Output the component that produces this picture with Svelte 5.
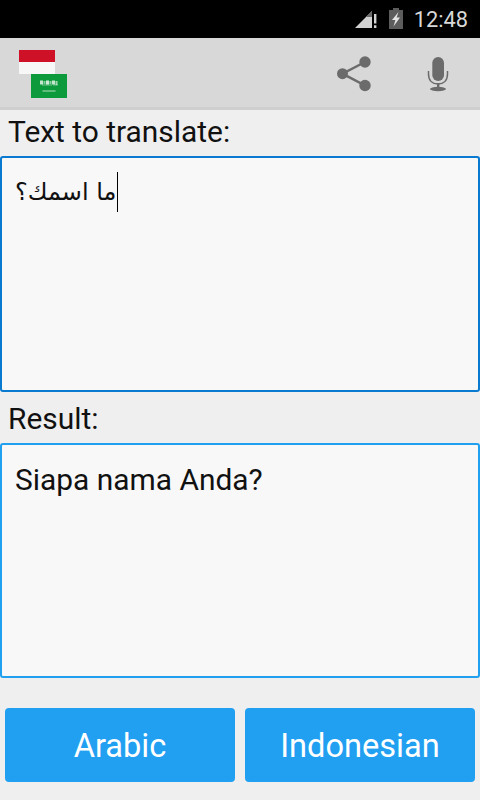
<script>
  const source = 'ما اسمك؟';
  const script = [
    [9, 6.5, 3, 4, 0.75], [12.500, 7, 2, 3, 0.5], [15, 6.500, 3, 4, 0.8], [18.500, 7, 2, 3, 0.55],
    [21, 6.500, 3, 4, 0.75], [24.500, 7, 2, 4, 0.6], [11, 10.500, 10, 1, 0.45], [22, 10.500, 5, 1, 0.4]
  ];
</script>

<div class="screen">
  <header class="status">
    <svg class="signal" width="22" height="20" viewBox="0 0 22 20">
      <path d="M0 19 L17 2 V19 Z" fill="#d2d2d2" />
      <path d="M11 8 L17 2 V8 Z" fill="#6a6a6a" />
      <path d="M19 5 h2.400 v9.500 h-2.400 z M19 16.200 h2.400 v2.800 h-2.400 z" fill="#d2d2d2" />
    </svg>
    <svg class="battery" width="14" height="21" viewBox="0 0 14 21">
      <path d="M4 0 h6 v2 h4 v19 H0 V2 h4 z" fill="#5c5c5c" />
      <path d="M9.500 4 L3 12 h3.400 L4.500 18.500 L11 9.500 H7.600 Z" fill="#e4e4e4" />
    </svg>
    <span class="clock">12:48</span>
  </header>

  <nav class="toolbar">
    <div class="flags">
      <svg class="flag-id" width="36" height="24" viewBox="0 0 36 24">
        <rect width="36" height="12" fill="#ce1126" />
        <rect y="12" width="36" height="12" fill="#f7f7f7" />
      </svg>
      <svg class="flag-sa" width="36" height="24" viewBox="0 0 36 24">
        <rect width="36" height="24" fill="#0d9a3c" />
        {#each script as [x, y, w, h, o]}
          <rect {x} {y} width={w} height={h} fill="#fff" opacity={o} />
        {/each}
        <rect x="11.500" y="16.500" width="13" height="1" fill="#b5dfc0" />
      </svg>
    </div>
    <div class="actions">
      <svg class="share" width="36" height="36" viewBox="0 0 36 36">
        <path d="M30 6 L7.500 17.700 L30 29.500" fill="none" stroke="#6b6b6b" stroke-width="2.500" />
        <circle cx="30" cy="6" r="5.700" fill="#6b6b6b" />
        <circle cx="7.500" cy="17.700" r="5.500" fill="#6b6b6b" />
        <circle cx="30" cy="29.500" r="5.700" fill="#6b6b6b" />
      </svg>
      <svg class="mic" width="24" height="36" viewBox="0 0 24 36">
        <rect x="6.300" y="1" width="11.700" height="24" rx="5.800" fill="#6b6b6b" />
        <path d="M2.500 15 V18 C2.500 24.500 6.500 28 12 28 C17.500 28 21.500 24.500 21.500 18 V15" fill="none" stroke="#6b6b6b" stroke-width="1.500" />
        <rect x="11" y="27" width="2.400" height="5" fill="#6b6b6b" />
        <ellipse cx="12" cy="33" rx="8" ry="2.200" fill="#6b6b6b" />
      </svg>
    </div>
  </nav>

  <main class="content">
    <label class="label first" for="source">Text to translate:</label>
    <div id="source" class="box focused">
      <span class="arabic" dir="rtl">{source}</span><span class="caret"></span>
    </div>

    <div class="label second">Result:</div>
    <div class="box result">Siapa nama Anda?</div>

    <div class="buttons">
      <button type="button">Arabic</button>
      <button type="button">Indonesian</button>
    </div>
  </main>
</div>

<style>
  :global(body) {
    margin: 0;
    background: #efefef;
  }

  .screen {
    width: 480px;
    height: 800px;
    display: flex;
    flex-direction: column;
    overflow: hidden;
    background: #efefef;
    font-family: Roboto, sans-serif;
    font-weight: 400;
    color: #111;
  }

  .status {
    height: 38px;
    flex: none;
    box-sizing: border-box;
    display: flex;
    align-items: center;
    justify-content: flex-end;
    padding-right: 12px;
    background: #000;
  }

  .signal {
    margin-right: 12px;
  }

  .battery {
    margin-right: 11px;
    margin-top: -2px;
  }

  .clock {
    color: #d8d8d8;
    font-size: 21.800px;
    line-height: 38px;
    margin-top: 1px;
  }

  .toolbar {
    height: 72px;
    flex: none;
    box-sizing: border-box;
    display: flex;
    justify-content: space-between;
    background: #d8d8d8;
    border-bottom: 3px solid #cfcfcf;
  }

  .flags {
    display: flex;
    flex-direction: column;
    padding: 12px 0 0 19px;
  }

  .flags svg {
    display: block;
  }

  .flag-sa {
    margin-left: 12px;
  }

  .actions {
    display: flex;
    align-items: flex-start;
    padding: 18px 30px 0 0;
  }

  .share {
    margin-right: 55px;
  }

  .label {
    display: block;
    font-size: 29.900px;
    line-height: 33px;
    padding-left: 8px;
    color: #111;
  }

  .first {
    margin-top: 5px;
    margin-bottom: 8px;
  }

  .second {
    margin-top: 10px;
    margin-bottom: 8px;
  }

  .box {
    height: 236px;
    box-sizing: border-box;
    border: 2px solid #0a7ad1;
    border-radius: 3px;
    background: #f8f8f8;
    padding: 15px 13px;
    font-size: 29.900px;
    line-height: 40px;
    display: flex;
    align-items: flex-start;
  }

  .box.result {
    height: 235px;
    border-color: #21a0f0;
  }

  .arabic {
    font-family: "DejaVu Sans", sans-serif;
    font-size: 24px;
    line-height: 38px;
  }

  .caret {
    width: 1px;
    height: 40px;
    margin-top: -1px;
    margin-left: 1px;
    background: #000;
  }

  .buttons {
    display: flex;
    gap: 10px;
    margin-top: 30px;
    padding: 0 5px;
  }

  button {
    flex: 1;
    height: 74px;
    border: 0;
    border-radius: 4px;
    background: #21a0f2;
    color: #fff;
    font-family: Roboto, sans-serif;
    font-size: 32.600px;
    padding: 2px 0 0;
  }
</style>
